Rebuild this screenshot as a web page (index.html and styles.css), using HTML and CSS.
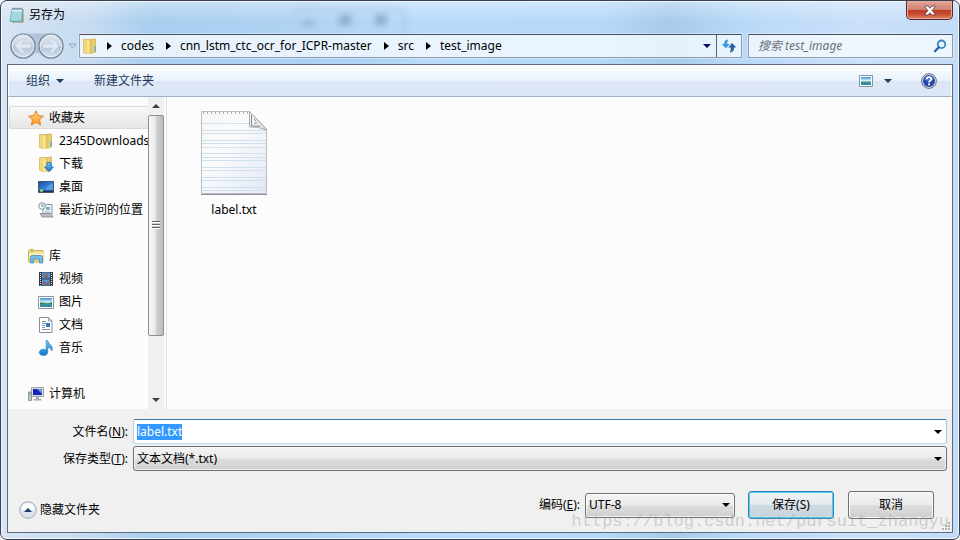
FILE: index.html
```html
<!DOCTYPE html>
<html lang="zh-CN">
<head>
<meta charset="utf-8">
<meta name="viewport" content="width=device-width, initial-scale=1">
<title>另存为</title>
<link rel="stylesheet" href="styles.css">
</head>
<body>
<svg class="defs" aria-hidden="true">
  <defs>
    <linearGradient id="gold" x1="0" x2="1"><stop offset="0" stop-color="#fdf3b8"/><stop offset=".5" stop-color="#f0d876"/><stop offset="1" stop-color="#d9b84c"/></linearGradient>
    <linearGradient id="orange" x1="0" y1="0" x2="0" y2="1"><stop offset="0" stop-color="#ffd98a"/><stop offset="1" stop-color="#ff9a1c"/></linearGradient>
    <linearGradient id="blue" x1="0" y1="0" x2="0" y2="1"><stop offset="0" stop-color="#6cc8f5"/><stop offset="1" stop-color="#1677c4"/></linearGradient>
    <linearGradient id="scene" x1="0" y1="0" x2="0" y2="1"><stop offset="0" stop-color="#3b8fd4"/><stop offset=".45" stop-color="#d9f1f8"/><stop offset=".65" stop-color="#3f9a7c"/><stop offset="1" stop-color="#2d7fc0"/></linearGradient>
    <linearGradient id="screen" x1="0" y1="0" x2="1" y2="1"><stop offset="0" stop-color="#1c4f9f"/><stop offset=".6" stop-color="#3a86dc"/><stop offset="1" stop-color="#1c56a8"/></linearGradient>
    <linearGradient id="orb" x1="0" y1="0" x2="0" y2="1"><stop offset="0" stop-color="#dfe8f1"/><stop offset=".48" stop-color="#c9d5e2"/><stop offset=".5" stop-color="#b3c2d4"/><stop offset="1" stop-color="#d5e3f1"/></linearGradient>
    <linearGradient id="sheet" x1="0" y1="0" x2="1" y2="1"><stop offset="0" stop-color="#f6f6f6"/><stop offset=".4" stop-color="#fafbfd"/><stop offset="1" stop-color="#e4e8f4"/></linearGradient>
    <symbol id="i-folder" viewBox="0 0 16 16">
      <path d="M1.500 1.500h6l1 1v12l-3 1-4-1z" fill="#efd77c" stroke="#d3b558" stroke-width=".7"/>
      <path d="M8 1.500 13.500 1v13L8 15.500z" fill="#e9cd6c" stroke="#cdab45" stroke-width=".7"/>
      <path d="M5.500 3.500 9.500 1.500v13l-4 1z" fill="url(#gold)"/>
      <path d="M12.500 8.500H14v5h-1.500z" fill="#5eb0e2"/>
    </symbol>
  </defs>
</svg>

<main class="dialog">
  <div class="ghost" aria-hidden="true"><i></i><i></i><i></i></div>

  <header class="titlebar">
    <svg class="app-icon" viewBox="0 0 16 16" aria-hidden="true">
      <path d="M3 2h11.500v13.500H3z" fill="#a58a5c"/>
      <path d="M3 2h10.500L13 14.500H1z" fill="#8fd0da" stroke="#5f9fae" stroke-width=".7"/>
      <path d="M3 2.500h10v2H2.800z" fill="#e3f3f6"/>
      <path d="M3 6h9.500M2.800 8h9.500M2.500 10h9.500M2.300 12h9.500" stroke="#bfe7ec" stroke-width=".8"/>
      <path d="M4 .8v2M6 .8v2M8 .8v2M10 .8v2M12 .8v2" stroke="#56656b" stroke-width=".9"/>
    </svg>
    <h1>另存为</h1>
    <button class="close" aria-label="关闭">
      <svg viewBox="0 0 12 11" aria-hidden="true"><path d="M1 1h3l2 2.300L8 1h3v1L8 5.500 11 9v1H8L6 7.700 4 10H1V9l3-3.500L1 2z" fill="#fff" stroke="#5b4a56" stroke-width=".9"/></svg>
    </button>
  </header>

  <div class="navbar">
    <div class="history">
      <svg viewBox="0 0 56 28" aria-hidden="true">
        <path d="M14 1.500h28a12 12 0 0 1 0 25.500q-7 0-11-5-3-2.500-6 0-4 5-11 5a12 12 0 0 1 0-25.500z" fill="#9cb1c8" opacity=".6"/>
        <circle cx="14" cy="14" r="12" fill="url(#orb)" stroke="#718398" stroke-width="1.200"/>
        <circle cx="42" cy="14" r="12" fill="url(#orb)" stroke="#718398" stroke-width="1.200"/>
        <circle cx="14" cy="14" r="10.800" fill="none" stroke="#e9f1f8" stroke-width=".8"/>
        <circle cx="42" cy="14" r="10.800" fill="none" stroke="#e9f1f8" stroke-width=".8"/>
        <path d="M6 14l7-7h3l-4 5H22v4H12l4 5h-3z" fill="#dfe8f2" stroke="#bccada" stroke-width=".5"/>
        <path d="M50 14l-7-7h-3l4 5H34v4h10l-4 5h3z" fill="#dfe8f2" stroke="#bccada" stroke-width=".5"/>
      </svg>
      <svg class="history-more" viewBox="0 0 9 6" aria-hidden="true"><path d="M1 1h7L4.500 5z" fill="#d4e4f5" stroke="#8ea4bd"/></svg>
    </div>
    <div class="address">
      <svg class="icon" aria-hidden="true"><use href="#i-folder"/></svg>
      <nav class="crumbs" aria-label="路径">
        <a href="#">codes</a><a href="#">cnn_lstm_ctc_ocr_for_ICPR-master</a><a href="#">src</a><a href="#">test_image</a>
      </nav>
      <button class="drop navy" aria-label="以前的位置"></button>
      <button class="refresh" aria-label="刷新">
        <svg viewBox="0 0 16 16" aria-hidden="true"><path d="M7.500 1.500Q3 1.500 3 6H.8L4.800 10.500 8.800 6H6.200Q6 3 7.500 1.500z" fill="#3d9bdd"/><path d="M8.800 14.500Q13.200 14 13 9.500h2.200L11.200 5 7.200 9.500H9.800q.3 3-1 5z" fill="#2560ab"/></svg>
      </button>
    </div>
    <div class="search">
      <input type="text" placeholder="搜索 test_image" aria-label="搜索 test_image">
      <svg viewBox="0 0 14 14" aria-hidden="true"><circle cx="8.500" cy="5.300" r="3.800" fill="#e7f4fd" stroke="#3a86c8" stroke-width="1.800"/><path d="M5.800 8.200 2 12.200" stroke="#2b5fa8" stroke-width="2.200" stroke-linecap="round"/></svg>
    </div>
  </div>

  <div class="client">
    <div class="toolbar">
      <button class="organize">组织</button>
      <button>新建文件夹</button>
      <button class="view" aria-label="更改您的视图">
        <svg viewBox="0 0 14 12" aria-hidden="true"><path d="M.5.5h13v11H.5z" fill="#fff" stroke="#8496ab"/><path d="M2 2h10v8H2z" fill="url(#scene)"/></svg>
      </button>
      <button class="help" aria-label="帮助">
        <svg viewBox="0 0 16 16" aria-hidden="true"><circle cx="8" cy="8" r="7.400" fill="#d4d8e0" stroke="#6d7482" stroke-width="1"/><circle cx="8" cy="8" r="6" fill="#2749ae"/><path d="M3 6.500a5.500 5.500 0 0 1 10 0Q8 9 3 6.500z" fill="#6c92e0" opacity=".7"/><path d="M5.700 6.200Q5.700 4 8 4t2.300 2Q10.300 7.200 9 7.900 8 8.400 8 9.500" fill="none" stroke="#fff" stroke-width="1.700"/><path d="M7.100 10.600h1.800v1.700H7.100z" fill="#fff"/></svg>
      </button>
    </div>

    <div class="browser">
      <nav class="tree" aria-label="导航窗格">
        <ul>
          <li><a class="current" href="#">
            <svg class="icon" viewBox="0 0 16 16" aria-hidden="true"><path d="M8 .8l2.200 4.800 5.200.6-3.900 3.500 1.100 5.200L8 12.300l-4.600 2.600 1.100-5.200L.6 6.200l5.200-.6z" fill="url(#orange)" stroke="#e07a1c" stroke-width=".9"/></svg>
            <span>收藏夹</span></a>
            <ul>
              <li><a href="#"><svg class="icon" aria-hidden="true"><use href="#i-folder"/></svg><span>2345Downloads</span></a></li>
              <li><a href="#"><svg class="icon" viewBox="0 0 16 16" aria-hidden="true"><use href="#i-folder" width="16" height="16"/><path d="M9 6.500h4V11h2.500L11 15.700 6.500 11H9z" fill="url(#blue)" stroke="#1d6fb0" stroke-width=".8"/></svg><span>下载</span></a></li>
              <li><a href="#"><svg class="icon" viewBox="0 0 16 16" aria-hidden="true"><path d="M.5 2.500h15v11H.5z" fill="url(#screen)" stroke="#44566e"/><path d="M8 10q3-5 7-5v6H8z" fill="#79b7f0" opacity=".5"/><path d="M1 11.500h14v1.500H1z" fill="#16345f"/><circle cx="3.500" cy="11.500" r="1.600" fill="#8ed36b"/></svg><span>桌面</span></a></li>
              <li><a href="#"><svg class="icon" viewBox="0 0 16 16" aria-hidden="true"><path d="M5 2.500h9v9.500H5z" fill="#eef4f8" stroke="#8d979f"/><path d="M8 5h4v3H8z" fill="#73b4d8"/><path d="M7 10h5" stroke="#94a3ae"/><path d="M2 11.500h11l2 3.500H4z" fill="#b9bfc4" stroke="#848b91" stroke-width=".8"/><circle cx="4" cy="4" r="3.300" fill="#f2f4f5" stroke="#8d959b"/><path d="M4 2v2.200h1.800" fill="none" stroke="#5d6b77" stroke-width=".8"/></svg><span>最近访问的位置</span></a></li>
            </ul>
          </li>
          <li><a href="#">
            <svg class="icon" viewBox="0 0 16 16" aria-hidden="true"><path d="M.5 2.500l1-1h4l1 1h8.500V14H.5z" fill="#f0d678" stroke="#c9a846" stroke-width=".8"/><path d="M1 4.500h14v5H1z" fill="#fbedb0"/><path d="M2.500 15V9.500q0-2 2-2h8q2 0 2 2V15h-3v-4h-6v4z" fill="#70bfe8" stroke="#3c8fc0" stroke-width=".8"/><path d="M3 3.200h2" stroke="#5cab4b" stroke-width="1.200"/></svg>
            <span>库</span></a>
            <ul>
              <li><a href="#"><svg class="icon" viewBox="0 0 16 16" aria-hidden="true"><path d="M1 1h14v14H1z" fill="#34383f"/><path d="M4 1.500h8v6H4zM4 8.500h8v6H4z" fill="#4a9bd8"/><path d="M4 2l3 2 4-2.500L9 5l3 2H5l1-2zM5 9l3 3 4-3-1 5H8l-3-1z" fill="#9a5148" opacity=".75"/><path d="M2.500 2v12.500M13.500 2v12.500" stroke="#e9edf0" stroke-width="1" stroke-dasharray="1 1"/></svg><span>视频</span></a></li>
              <li><a href="#"><svg class="icon" viewBox="0 0 16 16" aria-hidden="true"><path d="M.5 2.500h15v12H.5z" fill="#fff" stroke="#8995a1"/><path d="M2 4h12v9H2z" fill="url(#scene)"/><path d="M2 8.500q3 0 6 1t6-1.500V10H2z" fill="#2d8062"/></svg><span>图片</span></a></li>
              <li><a href="#"><svg class="icon" viewBox="0 0 16 16" aria-hidden="true"><path d="M1.500 .5h9L14 4v11.500H1.500z" fill="#fff" stroke="#86919b"/><path d="M10.500.5V4H14z" fill="#dce3e9" stroke="#86919b" stroke-width=".8"/><path d="M4 4.500h4M4 6.500h4M4 8.500h3M4 10.500h3M4 12.500h8" stroke="#8196aa" stroke-width="1"/><path d="M8 6h4v4H8z" fill="#3878bb"/></svg><span>文档</span></a></li>
              <li><a href="#"><svg class="icon" viewBox="0 0 16 16" aria-hidden="true"><path d="M8.200.5h1.600q.4 2.800 2.700 4.300 3 2.500 1.200 6.200-.6-3-3.900-3.700v4.700q-.2 3.500-4.500 3.500-4 0-4-2.900 0-3.200 4-3.400 1.900 0 2.900.6z" fill="url(#blue)" stroke="#2080c4" stroke-width=".6"/></svg><span>音乐</span></a></li>
            </ul>
          </li>
          <li><a href="#">
            <svg class="icon" viewBox="0 0 16 16" aria-hidden="true"><path d="M3.500 1.500h12v9h-12z" fill="#d6dade" stroke="#8a9096" stroke-width=".8"/><path d="M5 3h9v6H5z" fill="#1623b5"/><path d="M9 3h5v5z" fill="#6f8ff0"/><path d="M8 11h3v2h2.500v1.500h-8V13H8z" fill="#a5abb1"/><path d="M.5 6h3v8.500h-3z" fill="#bfc5ca" stroke="#7f878e" stroke-width=".8"/><path d="M1 8h2" stroke="#58b54a" stroke-width="1.200"/></svg>
            <span>计算机</span></a>
          </li>
        </ul>
      </nav>
      <div class="scrollbar" aria-hidden="true">
        <span class="arrow up"></span>
        <div class="track"><div class="thumb"><i></i></div></div>
        <span class="arrow"></span>
      </div>
      <section class="files" aria-label="文件">
        <a class="file" href="#">
          <svg viewBox="0 0 68 86" aria-hidden="true">
            <path d="M1 84.500h66" stroke="#8b8f97" stroke-width="1"/>
            <path d="M1.500 1.500h48L66.500 19v64.500H1.500z" fill="url(#sheet)" stroke="#b9bcc2"/>
            <path d="M2 13.500h47M2 20.500h64M2 23.500h64M2 30.500h64M2 33.500h64M2 37.500h64M2 43.500h64M2 47.500h64M2 50.500h64M2 57.500h64M2 60.500h64M2 67.500h64M2 70.500h64M2 77.500h64M2 80.500h64" stroke="#cfe1ea"/>
            <path d="M3 3h46" stroke="#aaa" stroke-width="2" stroke-dasharray="1 3"/>
            <path d="M49.500 1.500v15.500q8-1 17 3z" fill="#f0f1f3" stroke="#a3a6ab"/>
            <path d="M51.500 5v11h9M54 9l2 2M54 13h3" fill="none" stroke="#8a8a8a"/>
          </svg>
          <span>label.txt</span>
        </a>
      </section>
    </div>

    <form class="form">
      <div class="fields">
        <label for="filename">文件名(<u>N</u>):</label>
        <div class="combo edit">
          <input id="filename" type="text" value="label.txt" autocomplete="off">
          <button type="button" class="drop" aria-label="显示历史文件名"></button>
        </div>
        <label for="filetype">保存类型(<u>T</u>):</label>
        <div class="combo"><select id="filetype"><option>文本文档(*.txt)</option></select></div>
      </div>
      <div class="actions">
        <button type="button" class="hide">
          <svg viewBox="0 0 18 18" aria-hidden="true"><circle cx="9" cy="9" r="8.300" fill="#dde4ee" stroke="#a3adbd"/><path d="M2 9a7 7 0 0 1 14 0z" fill="#fbfcfe"/><path d="M5 11h8L9 7z" fill="#1d3a6b"/></svg>
          隐藏文件夹
        </button>
        <label for="encoding">编码(<u>E</u>):</label>
        <div class="combo encoding"><select id="encoding"><option>UTF-8</option></select></div>
        <button type="button" class="push default">保存(S)</button>
        <button type="button" class="push">取消</button>
      </div>
      <svg class="grip" viewBox="0 0 10 10" aria-hidden="true"><path d="M7 1h2v2H7zM4 4h2v2H4zM7 4h2v2H7zM1 7h2v2H1zM4 7h2v2H4zM7 7h2v2H7z" fill="#b3b3b3"/></svg>
    </form>
  </div>
  <p class="watermark">https://blog.csdn.net/pursuit_zhangyu</p>
</main>
<script src="script.js"></script>
</body>
</html>
```

FILE: styles.css
```css
* { box-sizing: border-box; }

body {
  margin: 0;
  background: #f4f4f4;
  color: #000;
  font: 12px/16px "Noto Sans", "Noto Sans CJK SC", sans-serif;
}

button, input, select { font: inherit; color: inherit; }
button { padding: 0; border: 0; background: none; }
a { color: inherit; text-decoration: none; }
ul { margin: 0; padding: 0; list-style: none; }
svg { display: block; flex: none; }
.defs { position: absolute; width: 0; height: 0; }
.icon { width: 16px; height: 16px; }

/* Glass frame */
.dialog {
  position: relative;
  display: flex;
  flex-direction: column;
  min-height: 100vh;
  padding: 0 6px 6px;
  border: 1px solid #38404f;
  border-radius: 7px;
  box-shadow: inset 0 0 0 1px #f0f7fe;
  background:
    linear-gradient(180deg, rgba(255,255,255,.35), rgba(255,255,255,0) 20px),
    linear-gradient(90deg, #d7e4f3 0, #c6dbf1 90px, #a9ceef 150px, #b0d3f4 300px, #b9dafa 420px, #b7d9f9 600px, #a9cbea 670px, #b9d9f8 740px, #cbe0f9 860px, #c2dcf7 100%);
}

.ghost {
  position: absolute;
  top: 8px;
  left: 290px;
  display: flex;
  gap: 24px;
  width: 115px;
  height: 50px;
  padding: 4px 12px;
  border: 2px solid #87a8ca;
  border-left: 0;
  border-radius: 6px;
  opacity: .5;
  filter: blur(3px);
}
.ghost i { width: 12px; height: 10px; background: #5f82a8; }
.ghost i:first-child { height: 4px; margin-top: 6px; }

.titlebar {
  position: relative;
  display: flex;
  align-items: center;
  gap: 4px;
  height: 28px;
  padding-left: 2px;
}
.app-icon { width: 16px; height: 16px; }
.titlebar h1 { margin: 0; font-size: 12px; font-weight: 400; }
.close {
  display: grid;
  place-items: center;
  align-self: flex-start;
  width: 47px;
  height: 19px;
  margin-left: auto;
  border: 1px solid #532631;
  border-top: 0;
  border-radius: 0 0 5px 5px;
  box-shadow: inset 0 0 0 1px #eaa99d;
  background: linear-gradient(#e3a79a, #d28071 48%, #bb3a22 50%, #c94e34 75%, #e08a68);
}
.close svg { width: 12px; height: 11px; }

.navbar {
  position: relative;
  display: flex;
  align-items: center;
  height: 35px;
  padding-bottom: 2px;
}
.history { display: flex; align-items: center; gap: 3px; width: 72px; padding-left: 2px; }
.history svg { width: 56px; height: 28px; }
.history .history-more { width: 9px; height: 6px; }
.address, .search {
  display: flex;
  align-items: center;
  height: 24px;
  border: 1px solid #8f9eae;
  border-top-color: #46525f;
  border-radius: 1px;
  background: rgba(250,252,255,.76);
  box-shadow: 0 0 0 1px rgba(255,255,255,.35);
}
.address { flex: 1; padding-left: 2px; }
.crumbs { display: flex; flex: 1; padding-left: 9px; }
.crumbs a { display: flex; align-items: center; gap: 9px; padding-right: 12px; }
.crumbs a::before {
  content: "";
  border: 4px solid transparent;
  border-left: 5px solid #000;
  border-right: 0;
}
.drop { display: grid; place-items: center; width: 19px; height: 100%; }
.drop::before, .organize::after, .view::after, .combo:has(select)::after {
  content: "";
  border: 4px solid transparent;
  border-top-color: currentColor;
  border-bottom: 0;
}
.navy { color: #000d63; }
.refresh {
  display: grid;
  place-items: center;
  width: 25px;
  height: 22px;
  border-left: 1px solid #57636f;
}
.refresh svg { width: 16px; height: 16px; }
.search { flex: 0 1 202px; margin-left: 6px; padding: 0 5px 0 8px; }
.search input {
  flex: 1;
  min-width: 0;
  padding: 0 1px;
  border: 0;
  outline: 0;
  background: none;
}
.search input::placeholder { color: #6b7178; font-style: italic; opacity: 1; }
.search svg { width: 14px; height: 14px; }

/* Client area */
.client {
  position: relative;
  display: flex;
  flex: 1;
  flex-direction: column;
  border: 1px solid #5a6b84;
  background: #f0f0f0;
}
.toolbar {
  display: flex;
  align-items: center;
  height: 32px;
  padding: 0 14px 0 17px;
  border: 1px solid #fff;
  border-bottom-color: #a0afc8;
  background: linear-gradient(#fcfeff, #e8f1fa 48%, #dce6f4 50%, #dde7f5);
  color: #1e395b;
}
.toolbar button { display: flex; align-items: center; }
.organize { gap: 6px; margin-right: 30px; }
.view { gap: 11px; margin-left: auto; }
.view svg { width: 14px; height: 12px; }
.help { margin-left: 29px; }
.help svg { width: 16px; height: 16px; }

.browser { display: flex; flex: 1; background: #fcfcfc; }
.tree { width: 140px; overflow: hidden; padding: 9px 0 4px 1px; }
.tree a {
  display: flex;
  align-items: center;
  gap: 5px;
  height: 23px;
  padding-left: 18px;
  border: 1px solid transparent;
  white-space: nowrap;
}
.tree ul ul a { padding-left: 28px; }
.tree > ul > li + li { margin-top: 23px; }
.tree .current {
  border-color: #d9d9d9;
  border-right: 0;
  border-radius: 3px 0 0 3px;
  background: linear-gradient(#f9f9f9, #e6e6e6);
}
.scrollbar {
  display: flex;
  flex-direction: column;
  width: 16px;
  background: #f0f0f0;
}
.arrow { display: grid; place-items: center; height: 18px; }
.arrow::before {
  content: "";
  border: 4px solid transparent;
  border-top-color: #404040;
  border-bottom: 0;
}
.up::before { border: 4px solid transparent; border-bottom-color: #404040; border-top: 0; }
.track { flex: 1; }
.thumb {
  display: grid;
  place-items: center;
  height: 80%;
  border: 1px solid #8e8e8e;
  border-radius: 2px;
  background: linear-gradient(90deg, #f7f7f7, #e9e9eb 45%, #cfcfd2 55%, #bcbcc0);
}
.thumb i { width: 8px; height: 8px; background: repeating-linear-gradient(#626262 0 1px, #fff 1px 2px, #ccc 2px 3px); }

.files { flex: 1; margin-left: 2px; padding: 13px 33px; border-left: 1px solid #d5e4f2; }
.file { display: inline-flex; flex-direction: column; align-items: center; gap: 6px; }
.file svg { width: 68px; height: 86px; }

/* Name, type and actions */
.form { position: relative; padding: 10px 5px 13px 9px; }
.fields {
  display: grid;
  grid-template-columns: 111px 1fr;
  align-items: center;
  gap: 2px 5px;
}
.fields label { text-align: right; }
.combo {
  position: relative;
  display: flex;
  align-items: center;
  height: 25px;
  border: 1px solid #707070;
  border-radius: 3px;
  background: linear-gradient(#f3f3f3, #ebebeb 49%, #dddddd 51%, #cfcfcf);
  box-shadow: inset 0 0 0 1px rgba(255,255,255,.7);
}
.combo select {
  flex: 1;
  height: 100%;
  padding: 0 20px 0 3px;
  border: 0;
  outline: 0;
  appearance: none;
  background: none;
}
.combo:has(select)::after { position: absolute; right: 4px; pointer-events: none; }
.combo.edit { border-color: #3d7bad #a4c9e3 #b7d9ed #b5cfe7; border-radius: 2px; background: #fff; }
.edit input {
  flex: 1;
  min-width: 0;
  padding: 0 3px;
  border: 0;
  outline: 0;
  background: none;
}
.edit input::selection { background: #39f; color: #fff; }
.edit .drop { width: 16px; }

.actions { display: flex; align-items: center; margin-top: 20px; padding-right: 13px; }
.hide { display: flex; align-items: center; gap: 3px; margin: 9px auto 0 2px; }
.hide svg { width: 18px; height: 18px; }
.encoding { width: 150px; margin: 0 13px 0 5px; }
.push {
  width: 86px;
  height: 28px;
  border: 1px solid #707070;
  border-radius: 3px;
  background: linear-gradient(#f3f3f3, #ebebeb 49%, #dddddd 51%, #cfcfcf);
  box-shadow: inset 0 0 0 1px #fbfbfb;
}
.push + .push { margin-left: 14px; }
.push.default {
  border-color: #3c7fb1;
  background: linear-gradient(#eff3f5, #e2e9ed 49%, #d0dbe1 51%, #c7d4dc);
  box-shadow: inset 0 0 0 1px #48d1f5;
}
.grip { position: absolute; right: 1px; bottom: 1px; width: 10px; height: 10px; }

.watermark {
  position: absolute;
  right: 10px;
  bottom: 7px;
  margin: 0;
  color: rgba(150,150,140,.4);
  font: 17px/20px "Liberation Mono", monospace;
  pointer-events: none;
}
```

FILE: script.js
```js
// The dialog opens with the suggested file name selected.
const filename = document.getElementById("filename");
filename.focus();
filename.select();
```
